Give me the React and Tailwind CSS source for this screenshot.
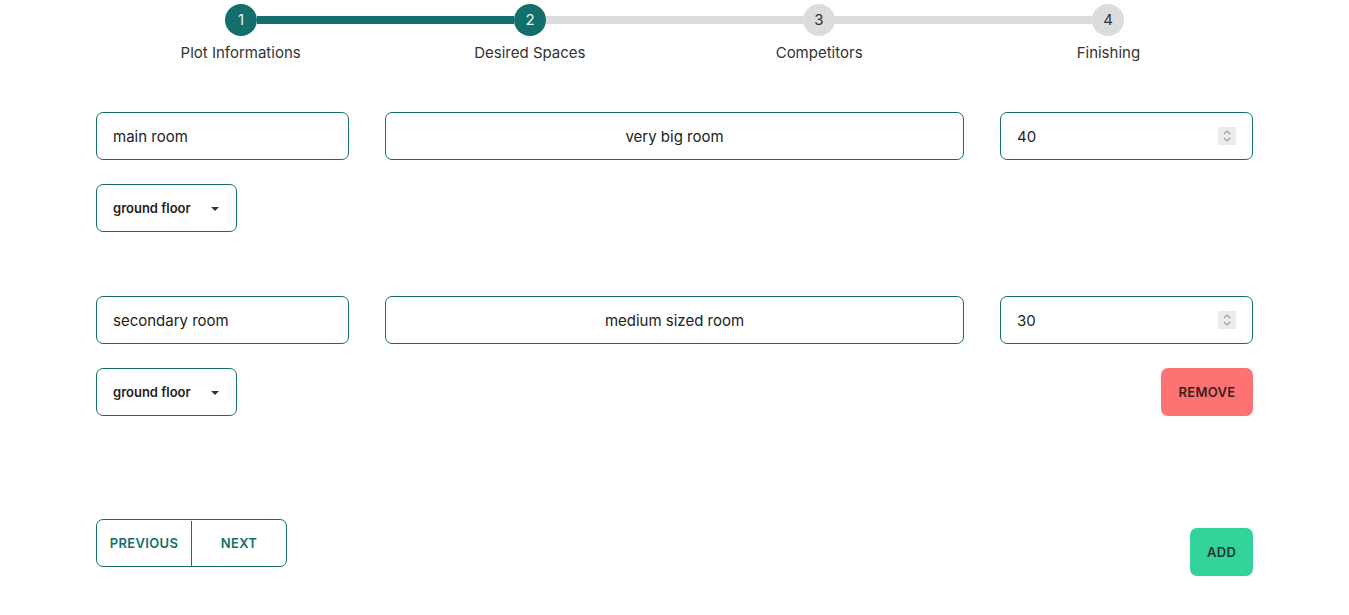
import React from "react";

function Step({ n, active }) {
  return (
    <div
      className={
        "w-8 h-8 rounded-full flex items-center justify-center text-[15px] shrink-0 pt-px " +
        (active ? "bg-[#136f6b] text-white/90" : "bg-[#dcdcdc] text-[#333]")
      }
    >
      {n}
    </div>
  );
}

function Spinner() {
  return (
    <div className="w-[18px] h-[18px] bg-[#ebebeb] flex flex-col items-center justify-center gap-[2px]">
      <svg width="8" height="5" viewBox="0 0 8 5"><path d="M1 4 L4 1 L7 4" fill="none" stroke="#9a9a9a" strokeWidth="1.1" /></svg>
      <svg width="8" height="5" viewBox="0 0 8 5"><path d="M1 1 L4 4 L7 1" fill="none" stroke="#9a9a9a" strokeWidth="1.1" /></svg>
    </div>
  );
}

function Select() {
  return (
    <div className="w-[141px] h-12 border border-[#136f6b] rounded-[7px] flex items-center justify-between pl-4 pr-[17px] pt-px text-[13px] font-semibold text-[#222]">
      <span>ground floor</span>
      <svg width="8" height="4" viewBox="0 0 8 4"><path d="M0 0 L8 0 L4 4 Z" fill="#333" /></svg>
    </div>
  );
}

function Room({ name, desc, size, removable }) {
  return (
    <div className="flex flex-col gap-6">
      <div className="grid grid-cols-[253px_1fr_253px] gap-9">
        <div className="h-12 border border-[#136f6b] rounded-[7px] flex items-center px-4 pt-[2px] text-[15px] text-[#222]">{name}</div>
        <div className="h-12 border border-[#136f6b] rounded-[7px] flex items-center justify-center pt-[2px] text-[15px] text-[#222]">{desc}</div>
        <div className="h-12 border border-[#136f6b] rounded-[7px] flex items-center justify-between pl-4 pr-4 text-[15px] text-[#222]">
          <span className="pt-[2px]">{size}</span>
          <Spinner />
        </div>
      </div>
      <div className="flex justify-between items-center">
        <Select />
        {removable && (
          <div className="w-[92px] h-12 rounded-[7px] bg-[#fd7272] flex items-center justify-center pt-px text-[13px] font-semibold text-[#3a2222] tracking-wide">REMOVE</div>
        )}
      </div>
    </div>
  );
}

export default function App() {
  return (
    <div className="w-full min-h-[615px] bg-white" style={{ fontFamily: "Inter, 'Noto Sans', sans-serif" }}>
      <div className="w-[1157px] mx-auto">
        <div className="pt-1">
          <div className="flex items-center px-[129px]">
            <Step n={1} active />
            <div className="flex-1 h-2 bg-[#136f6b]" />
            <Step n={2} active />
            <div className="flex-1 h-2 bg-[#dcdcdc]" />
            <Step n={3} />
            <div className="flex-1 h-2 bg-[#dcdcdc]" />
            <Step n={4} />
          </div>
          <div className="grid grid-cols-4 mt-[8px] text-[15px] text-[#333] text-center leading-[18px]">
            <div>Plot Informations</div>
            <div>Desired Spaces</div>
            <div>Competitors</div>
            <div>Finishing</div>
          </div>
        </div>
        <div className="mt-[50px] flex flex-col gap-16">
          <Room name="main room" desc="very big room" size="40" />
          <Room name="secondary room" desc="medium sized room" size="30" removable />
        </div>
        <div className="mt-[103px] flex justify-between items-start">
          <div className="flex h-12 border border-[#136f6b] rounded-[7px] pt-px text-[13px] font-semibold text-[#136f6b] tracking-wide">
            <div className="w-[95px] flex items-center justify-center border-r border-[#136f6b]">PREVIOUS</div>
            <div className="w-[94px] flex items-center justify-center">NEXT</div>
          </div>
          <div className="mt-[9px] w-[63px] h-12 rounded-[7px] bg-[#34d399] flex items-center justify-center pt-px text-[13px] font-semibold text-[#1f3a30] tracking-wide">ADD</div>
        </div>
      </div>
    </div>
  );
}
